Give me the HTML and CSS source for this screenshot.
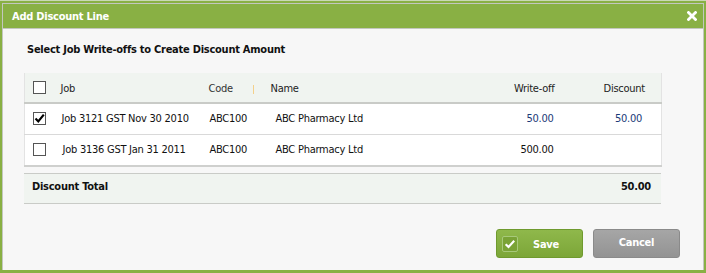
FILE: index.html
```html
<!DOCTYPE html>
<html>
<head>
<meta charset="utf-8">
<link rel="stylesheet" href="styles.css">
</head>
<body>
<div class="dialog">
  <div class="titlebar">
    <span class="title">Add Discount Line</span>
    <span class="close"><svg viewBox="0 0 10 10" width="10" height="10"><path d="M1.5 1.5 L8.5 8.5 M8.5 1.5 L1.5 8.5" stroke="#fff" stroke-width="2.8" stroke-linecap="square"/></svg></span>
  </div>
  <div class="content">
    <h2 class="heading">Select Job Write-offs to Create Discount Amount</h2>
    <table class="grid">
      <colgroup>
        <col class="c-cb"><col class="c-job"><col class="c-code"><col class="c-name"><col class="c-wo"><col class="c-disc">
      </colgroup>
      <thead>
        <tr>
          <th class="cb-cell"><span class="cb"></span></th>
          <th>Job</th>
          <th class="code-h">Code<span class="sep"></span></th>
          <th>Name</th>
          <th class="num wo-h">Write-off</th>
          <th class="num disc-h">Discount</th>
        </tr>
      </thead>
      <tbody>
        <tr>
          <td class="cb-cell"><span class="cb checked"><svg viewBox="0 0 13 13" width="13" height="13"><path d="M2.5 6.5 L5.3 9.4 L10.8 2.6" fill="none" stroke="#000" stroke-width="2.2"/></svg></span></td>
          <td class="job">Job 3121 GST Nov 30 2010</td>
          <td class="code">ABC100</td>
          <td class="name">ABC Pharmacy Ltd</td>
          <td class="num wo link">50.00</td>
          <td class="num disc link">50.00</td>
        </tr>
        <tr>
          <td class="cb-cell"><span class="cb"></span></td>
          <td class="job job2">Job 3136 GST Jan 31 2011</td>
          <td class="code">ABC100</td>
          <td class="name">ABC Pharmacy Ltd</td>
          <td class="num wo">500.00</td>
          <td class="num disc"></td>
        </tr>
      </tbody>
    </table>
    <div class="total">
      <span>Discount Total</span>
      <span>50.00</span>
    </div>
    <div class="actions">
      <button class="btn save"><span class="ico"><svg viewBox="0 0 16 16" width="14" height="14"><path d="M3 8.2 L6.3 11.3 L12.8 4.2" fill="none" stroke="#fff" stroke-width="2.4"/></svg></span><span class="lbl">Save</span></button>
      <button class="btn cancel">Cancel</button>
    </div>
  </div>
</div>
</body>
</html>
```
FILE: styles.css
```css
html, body {
  margin: 0;
  padding: 0;
}
body {
  background: #89b044;
  width: 706px;
  height: 273px;
  overflow: hidden;
  border-top: 1px solid #c9d9b4;
  box-sizing: border-box;
  font-family: "DejaVu Sans Condensed", "DejaVu Sans", sans-serif;
  font-size: 11px;
  letter-spacing: -0.25px;
  color: #111;
}
.dialog {
  margin: 2px 2px 0 2px;
  width: 702px;
  height: 267px;
  box-sizing: border-box;
  border: 1px solid #c3c7bf;
  border-bottom: none;
  background: #f7f7f7;
  display: flex;
  flex-direction: column;
}
.titlebar {
  height: 24px;
  background: #89b044;
  border-bottom: 1px solid #c3c7bf;
  display: flex;
  align-items: center;
  justify-content: space-between;
  padding: 0 6px 0 9px;
  color: #fff;
}
.title {
  font-weight: bold;
  font-size: 11px;
}
.close {
  display: flex;
  width: 10px;
  height: 10px;
}
.content {
  padding: 14px 41px 0 21px;
  display: flex;
  flex-direction: column;
}
.heading {
  margin: 0 0 0 3px;
  font-size: 11px;
  font-weight: bold;
  height: 14px;
  line-height: 14px;
  color: #111;
}
.grid {
  margin-top: 16px;
  width: 637px;
  table-layout: fixed;
  border-collapse: collapse;
  background: #fff;
  border-left: 1px solid #e3e3e3;
  border-right: 1px solid #e3e3e3;
}
.c-cb { width: 28px; }
.c-job { width: 148px; }
.c-code { width: 62px; }
.c-name { width: 198px; }
.c-wo { width: 102px; }
.c-disc { width: 99px; }
.grid th {
  background: #f0f4f0;
  font-weight: normal;
  text-align: left;
  height: 30px;
  box-sizing: border-box;
  padding: 2px 0 0 8px;
  color: #222;
  border-bottom: 2px solid #c9cbc7;
  position: relative;
}
.grid td {
  height: 31px;
  box-sizing: border-box;
  padding: 0 0 0 8px;
  border-bottom: 1px solid #d9d9d9;
  white-space: nowrap;
}
.grid tbody tr:last-child td {
  height: 32px;
  border-bottom: 2px solid #cfd0ce;
}
.grid th.cb-cell {
  padding-top: 0;
}
.grid th.cb-cell, .grid td.cb-cell {
  padding-left: 8px;
}
.cb {
  display: block;
  width: 13px;
  height: 13px;
  box-sizing: border-box;
  border: 1px solid #555;
  background: #fff;
  position: relative;
}
.cb svg {
  position: absolute;
  left: -1px;
  top: -1px;
}
.grid .code-h { color: #333; }
.sep {
  position: absolute;
  right: 9px;
  top: 12px;
  width: 1px;
  height: 9px;
  background: #f4d08a;
}
.grid .job { padding-left: 9px; }
.grid .job2 { padding-left: 10px; }
.grid .code { padding-left: 9px; }
.grid .name { padding-left: 13px; }
.grid .num { text-align: right; }
.grid .wo-h { padding-right: 8px; padding-left: 0; }
.grid td.wo { padding-right: 9px; padding-left: 0; }
.grid .disc-h { padding-right: 16px; padding-left: 0; }
.grid td.disc { padding-right: 19px; padding-left: 0; }
.link { color: #1b3a78; }
.total {
  margin-top: 6px;
  width: 637px;
  box-sizing: border-box;
  height: 31px;
  background: #f0f4f0;
  border-top: 1px solid #c9cbc7;
  border-bottom: 1px solid #c9cbc7;
  display: flex;
  align-items: center;
  justify-content: space-between;
  padding: 0 10px 4px 8px;
  font-weight: bold;
  color: #111;
}
.actions {
  display: flex;
  justify-content: flex-end;
  gap: 10px;
  margin-top: 25px;
  margin-right: -18px;
}
.btn {
  width: 87px;
  height: 29px;
  border-radius: 3px;
  font-family: "DejaVu Sans Condensed", "DejaVu Sans", sans-serif;
  font-size: 11px;
  font-weight: bold;
  letter-spacing: -0.25px;
  color: #fff;
  padding: 0;
  display: flex;
  align-items: center;
  justify-content: center;
}
.save {
  background: linear-gradient(#8fb84b, #7ca638);
  border: 1px solid #6f9a2e;
  justify-content: flex-start;
  padding-left: 5px;
}
.save .ico {
  width: 16px;
  height: 16px;
  box-sizing: border-box;
  border: 1px solid #a7c97a;
  background: #7aa336;
  border-radius: 2px;
  display: flex;
  align-items: center;
  justify-content: center;
}
.save .lbl {
  margin-left: 15px;
  margin-top: 2px;
}
.cancel {
  background: linear-gradient(#a6a6a6, #939393);
  border: 1px solid #8a8a8a;
  padding-bottom: 2px;
}
```
